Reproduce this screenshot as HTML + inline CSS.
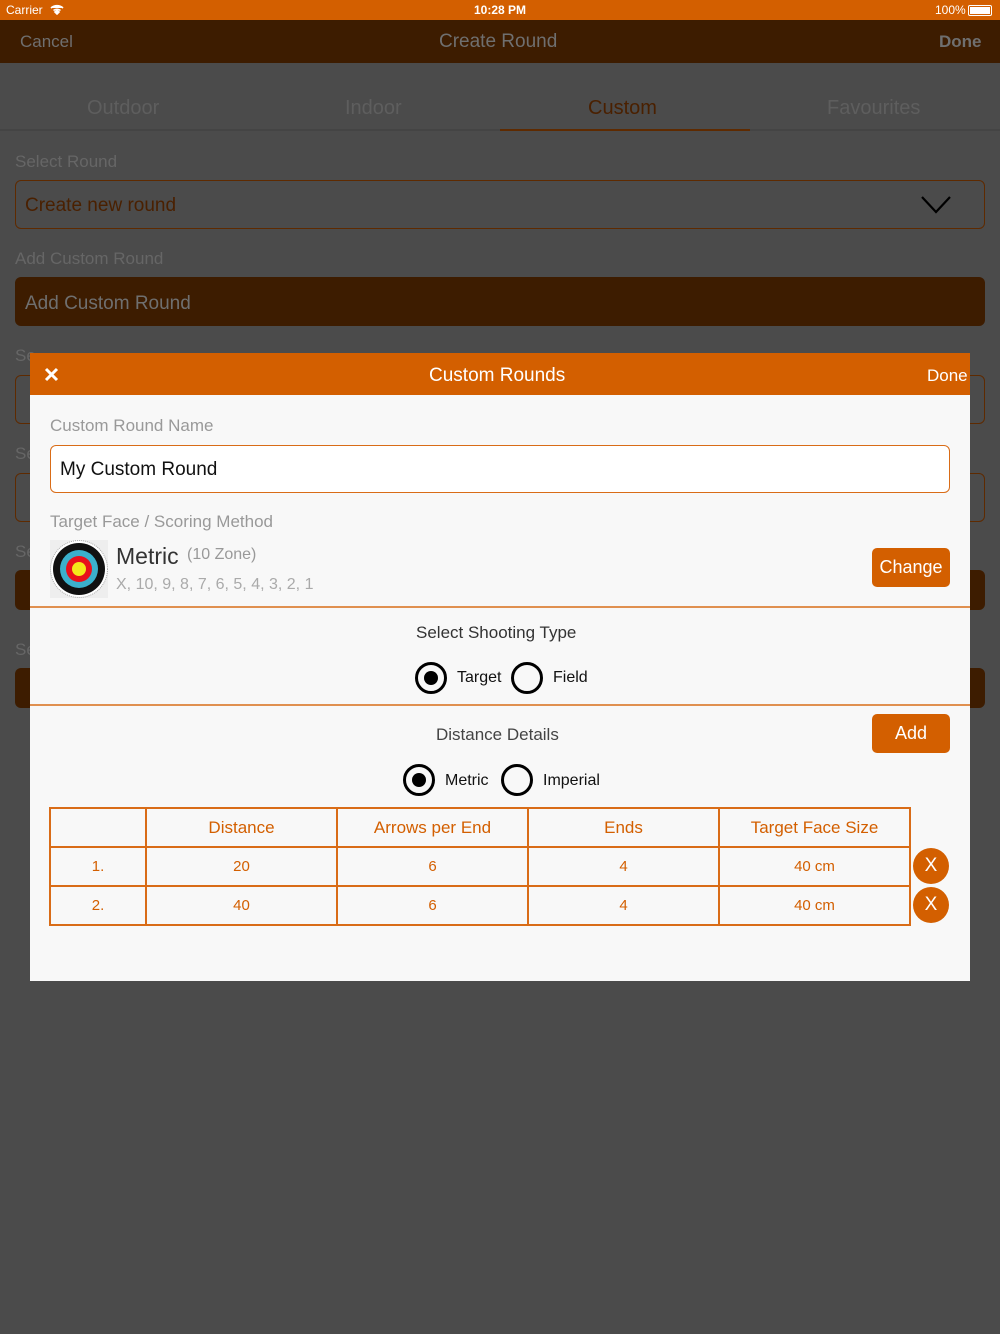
<!DOCTYPE html>
<html><head><meta charset="utf-8"><style>
*{margin:0;padding:0;box-sizing:border-box}
body{width:1000px;height:1334px;background:#4b4b4b;font-family:"Liberation Sans",sans-serif;position:relative;overflow:hidden}
.a{position:absolute}
.gl{color:#666;font-size:17px}
.r{position:absolute;width:32px;height:32px;border:3px solid #000;border-radius:50%}
.r.on::after{content:"";position:absolute;left:6px;top:6px;width:14px;height:14px;border-radius:50%;background:#000}
td{border:2px solid #d96c17;text-align:center;color:#d35f00;font-size:15px;height:39px}
.x{position:absolute;left:913px;width:36px;height:36px;border-radius:50%;background:#d35f00;color:#fff;font-size:19px;text-align:center;line-height:36px}
</style></head><body>
<div class="a" style="left:0;top:0;width:1000px;height:20px;background:#d35f00;color:#fff;font-size:12px">
<span class="a" style="left:6px;top:3px">Carrier</span>
<svg class="a" style="left:50px;top:4px" width="14" height="11" viewBox="0 0 14 11"><path d="M1 4a9 9 0 0 1 12 0M3.5 6.5a5.5 5.5 0 0 1 7 0M7 10l2-2a3 3 0 0 0-4 0z" stroke="#fff" stroke-width="1.6" fill="#fff"/></svg>
<span class="a" style="left:474px;top:3px;font-weight:bold">10:28 PM</span>
<span class="a" style="left:935px;top:3px">100%</span>
<div class="a" style="left:968px;top:5px;width:24px;height:11px;border:1px solid #fff;border-radius:2px;padding:1px"><div style="background:#fff;width:100%;height:100%"></div></div>
</div>
<div class="a" style="left:0;top:20px;width:1000px;height:43px;background:#3d1c00;color:#6f6f6f;font-size:17px">
<span class="a" style="left:20px;top:12px">Cancel</span>
<span class="a" style="left:439px;top:11px;font-size:19px">Create Round</span>
<span class="a" style="left:939px;top:12px;font-weight:bold">Done</span>
</div>
<div class="a" style="left:0;top:129px;width:1000px;height:2px;background:#444"></div>
<div class="a" style="left:500px;top:129px;width:250px;height:2px;background:#5e2a00"></div>
<span class="a" style="left:87px;top:97px;font-size:20px;color:#5e5e5e">Outdoor</span>
<span class="a" style="left:345px;top:97px;font-size:20px;color:#5e5e5e">Indoor</span>
<span class="a" style="left:588px;top:97px;font-size:20px;color:#4a2000">Custom</span>
<span class="a" style="left:827px;top:97px;font-size:20px;color:#5e5e5e">Favourites</span>
<span class="a gl" style="left:15px;top:152px">Select Round</span>
<div class="a" style="left:15px;top:180px;width:970px;height:49px;border:1px solid #5e2a00;border-radius:6px"></div>
<span class="a" style="left:25px;top:195px;font-size:19px;color:#4a2000">Create new round</span>
<svg class="a" style="left:920px;top:195px" width="32" height="20"><path d="M2 2l14 15L30 2" stroke="#000" stroke-width="2.2" fill="none"/></svg>
<span class="a gl" style="left:15px;top:249px">Add Custom Round</span>
<div class="a" style="left:15px;top:277px;width:970px;height:49px;background:#3d1c00;border-radius:6px"></div>
<span class="a" style="left:25px;top:293px;font-size:19px;color:#6f6f6f">Add Custom Round</span>
<span class="a gl" style="left:15px;top:346px">Se</span>
<div class="a" style="left:15px;top:375px;width:970px;height:49px;border:1px solid #5e2a00;border-radius:6px"></div>
<span class="a gl" style="left:15px;top:444px">Se</span>
<div class="a" style="left:15px;top:473px;width:970px;height:49px;border:1px solid #5e2a00;border-radius:6px"></div>
<span class="a gl" style="left:15px;top:542px">Se</span>
<div class="a" style="left:15px;top:570px;width:970px;height:40px;background:#3d1c00;border-radius:6px"></div>
<span class="a gl" style="left:15px;top:640px">Se</span>
<div class="a" style="left:15px;top:668px;width:970px;height:40px;background:#3d1c00;border-radius:6px"></div>

<div class="a" style="left:30px;top:353px;width:940px;height:628px;background:#f8f8f8">
<div class="a" style="left:0;top:0;width:940px;height:42px;background:#d35f00;color:#fff">
<svg class="a" style="left:14px;top:14px" width="15" height="15"><path d="M2 2l11 11M13 2L2 13" stroke="#fff" stroke-width="3"/></svg>
<span class="a" style="left:399px;top:12px;font-size:19px">Custom Rounds</span>
<span class="a" style="left:897px;top:13px;font-size:17px">Done</span>
</div>
<span class="a" style="left:20px;top:63px;font-size:17px;color:#999">Custom Round Name</span>
<div class="a" style="left:20px;top:92px;width:900px;height:48px;border:1px solid #d96c17;border-radius:6px;background:#fff"></div>
<span class="a" style="left:30px;top:106px;font-size:19px;color:#111">My Custom Round</span>
<span class="a" style="left:20px;top:159px;font-size:17px;color:#999">Target Face / Scoring Method</span>
<svg class="a" style="left:20px;top:187px" width="58" height="58" viewBox="0 0 58 58"><rect width="58" height="58" fill="#eee"/><circle cx="29" cy="29" r="28.5" fill="#fff" stroke="#aaa" stroke-dasharray="1 1"/><circle cx="29" cy="29" r="26" fill="#111"/><circle cx="29" cy="29" r="19" fill="#3bb0cc"/><circle cx="29" cy="29" r="13" fill="#e8101b"/><circle cx="29" cy="29" r="7" fill="#f4e81a"/></svg>
<span class="a" style="left:86px;top:190px;font-size:23px;color:#333">Metric</span>
<span class="a" style="left:157px;top:193px;font-size:16px;color:#999">(10 Zone)</span>
<span class="a" style="left:86px;top:223px;font-size:16px;color:#aaa">X, 10, 9, 8, 7, 6, 5, 4, 3, 2, 1</span>
<div class="a" style="left:842px;top:195px;width:78px;height:39px;background:#d35f00;border-radius:5px;color:#fff;font-size:18px;text-align:center;line-height:39px">Change</div>
<div class="a" style="left:0;top:253px;width:940px;height:2px;background:#e09050"></div>
<span class="a" style="left:386px;top:270px;font-size:17px;color:#333">Select Shooting Type</span>
<div class="r on" style="left:385px;top:309px"></div><span class="a" style="left:427px;top:316px;font-size:16px;color:#111">Target</span>
<div class="r" style="left:481px;top:309px"></div><span class="a" style="left:523px;top:316px;font-size:16px;color:#111">Field</span>
<div class="a" style="left:0;top:351px;width:940px;height:2px;background:#e09050"></div>
<span class="a" style="left:406px;top:372px;font-size:17px;color:#444">Distance Details</span>
<div class="a" style="left:842px;top:361px;width:78px;height:39px;background:#d35f00;border-radius:5px;color:#fff;font-size:18px;text-align:center;line-height:39px">Add</div>
<div class="r on" style="left:373px;top:411px"></div><span class="a" style="left:415px;top:419px;font-size:16px;color:#111">Metric</span>
<div class="r" style="left:471px;top:411px"></div><span class="a" style="left:513px;top:419px;font-size:16px;color:#111">Imperial</span>
<table class="a" style="left:19px;top:454px;width:862px;border-collapse:collapse">
<tr><td style="width:96px"></td><td style="width:191px;font-size:17px">Distance</td><td style="width:191px;font-size:17px">Arrows per End</td><td style="width:191px;font-size:17px">Ends</td><td style="font-size:17px">Target Face Size</td></tr>
<tr><td>1.</td><td>20</td><td>6</td><td>4</td><td>40 cm</td></tr>
<tr><td>2.</td><td>40</td><td>6</td><td>4</td><td>40 cm</td></tr>
</table>
</div>
<div class="x" style="top:848px">X</div>
<div class="x" style="top:887px">X</div>
</body></html>
